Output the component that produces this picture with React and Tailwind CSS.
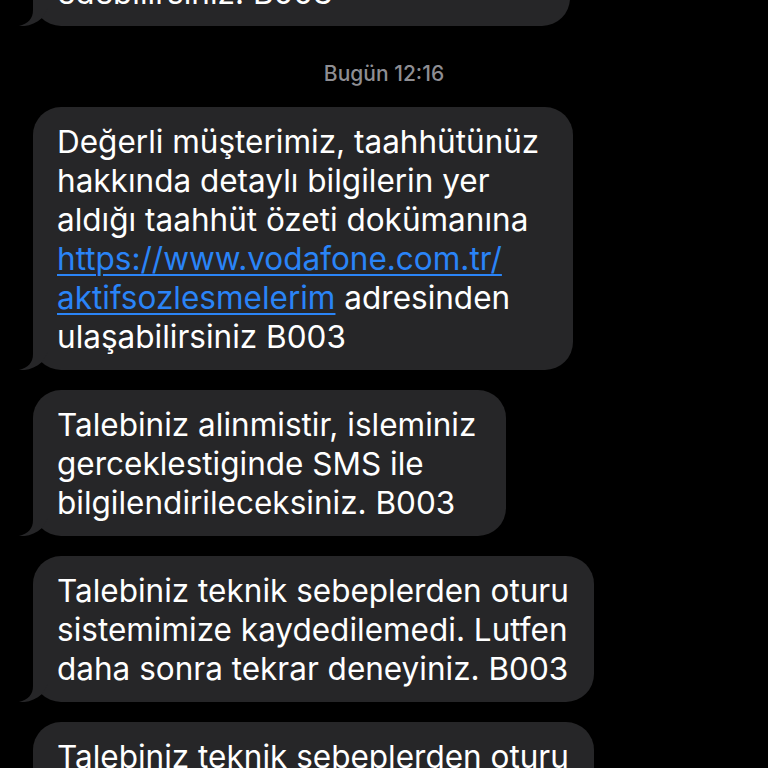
import React from 'react';

const font = { fontFamily: 'Inter, "Noto Sans", sans-serif' };

const Tail = () => (
  <svg
    className="absolute left-[-15px] bottom-0"
    width="30"
    height="28"
    viewBox="0 0 30 28"
  >
    <path
      d="M15 0 L15 12 C15 21 10 25.5 1 28 C9 28.8 17 26 24 20 L30 10 L30 0 Z"
      fill="#262628"
    />
  </svg>
);

const Bubble = ({ width, className = '', children }) => (
  <div
    className={`relative bg-[#262628] rounded-[28px] pl-[24px] pr-[18px] pt-[15px] pb-[14px] text-white text-[31.5px] leading-[39px] whitespace-nowrap ${width} ${className}`}
  >
    {children}
    <Tail />
  </div>
);

const Link = ({ children }) => (
  <span className="text-[#2a84f7] underline decoration-2 underline-offset-[4px]">{children}</span>
);

const App = () => {
  return (
    <div className="w-[768px] h-[768px] bg-black overflow-hidden flex flex-col pl-[33px]" style={font}>
      <Bubble width="w-[537px]" className="mt-[-42px]">
        edebilirsiniz. B003
      </Bubble>

      <div className="mt-[35px] mb-[20px] pr-[33px] text-center text-[21px] leading-[26px] font-medium text-[#8e8e93]">
        Bugün 12:16
      </div>

      <div className="flex flex-col gap-[20px]">
        <Bubble width="w-[540px]">
          Değerli müşterimiz, taahhütünüz
          <br />
          hakkında detaylı bilgilerin yer
          <br />
          aldığı taahhüt özeti dokümanına
          <br />
          <Link>https://www.vodafone.com.tr/</Link>
          <br />
          <Link>aktifsozlesmelerim</Link> adresinden
          <br />
          ulaşabilirsiniz B003
        </Bubble>

        <Bubble width="w-[473px]">
          Talebiniz alinmistir, isleminiz
          <br />
          gerceklestiginde SMS ile
          <br />
          bilgilendirileceksiniz. B003
        </Bubble>

        <Bubble width="w-[561px]">
          Talebiniz teknik sebeplerden oturu
          <br />
          sistemimize kaydedilemedi. Lutfen
          <br />
          daha sonra tekrar deneyiniz. B003
        </Bubble>

        <Bubble width="w-[561px]">
          Talebiniz teknik sebeplerden oturu
          <br />
          sistemimize kaydedilemedi. Lutfen
          <br />
          daha sonra tekrar deneyiniz. B003
        </Bubble>
      </div>
    </div>
  );
};

export default App;
